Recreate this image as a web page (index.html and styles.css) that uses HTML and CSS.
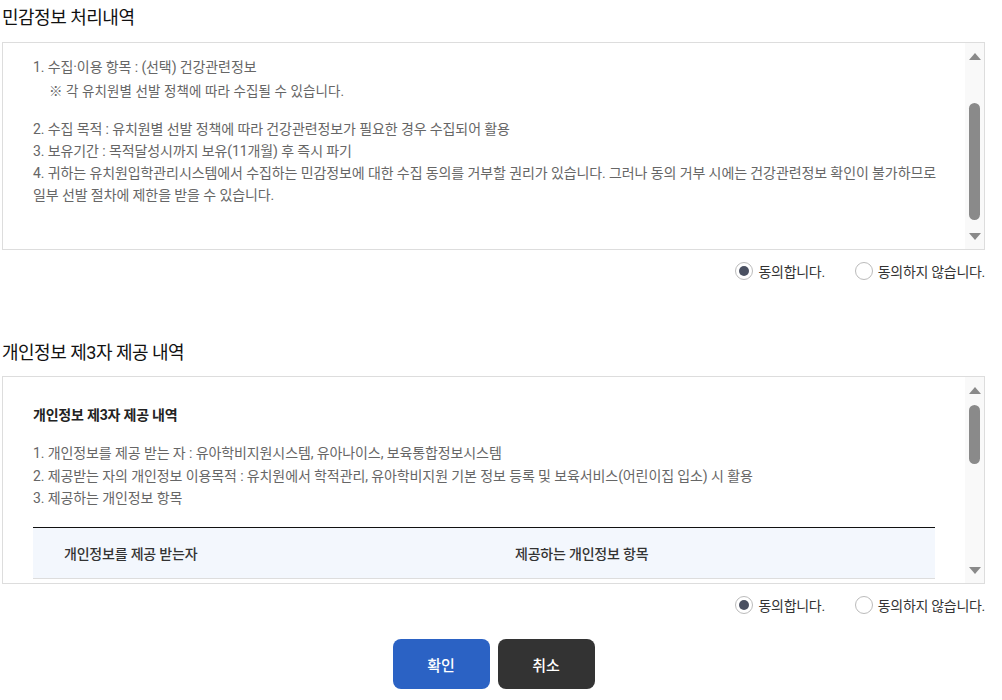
FILE: index.html
```html
<!DOCTYPE html>
<html lang="ko">
<head>
<meta charset="utf-8">
<title>동의</title>
<link rel="stylesheet" href="styles.css">
</head>
<body>
<div class="page">
  <h2 class="sec-title first">민감정보 처리내역</h2>
  <div class="box">
    <div class="box-content pad1">
      <p class="line">1. 수집·이용 항목 : (선택) 건강관련정보</p>
      <p class="line note">※ 각 유치원별 선발 정책에 따라 수집될 수 있습니다.</p>
      <p class="line gap">2. 수집 목적 : 유치원별 선발 정책에 따라 건강관련정보가 필요한 경우 수집되어 활용</p>
      <p class="line">3. 보유기간 : 목적달성시까지 보유(11개월) 후 즉시 파기</p>
      <p class="line">4. 귀하는 유치원입학관리시스템에서 수집하는 민감정보에 대한 수집 동의를 거부할 권리가 있습니다. 그러나 동의 거부 시에는 건강관련정보 확인이 불가하므로 일부 선발 절차에 제한을 받을 수 있습니다.</p>
    </div>
    <div class="sbar">
      <span class="arr up"></span>
      <div class="track"><span class="thumb t1"></span></div>
      <span class="arr down"></span>
    </div>
  </div>
  <div class="agree">
    <label class="radio"><span class="dot on"></span>동의합니다.</label>
    <label class="radio"><span class="dot"></span>동의하지 않습니다.</label>
  </div>

  <h2 class="sec-title second">개인정보 제3자 제공 내역</h2>
  <div class="box">
    <div class="box-content pad2">
      <p class="btitle">개인정보 제3자 제공 내역</p>
      <p class="line l2">1. 개인정보를 제공 받는 자 : 유아학비지원시스템, 유아나이스, 보육통합정보시스템</p>
      <p class="line l2">2. 제공받는 자의 개인정보 이용목적 : 유치원에서 학적관리, 유아학비지원 기본 정보 등록 및 보육서비스(어린이집 입소) 시 활용</p>
      <p class="line l2">3. 제공하는 개인정보 항목</p>
      <div class="tbl">
        <div class="th c1">개인정보를 제공 받는자</div>
        <div class="th c2">제공하는 개인정보 항목</div>
      </div>
    </div>
    <div class="sbar">
      <span class="arr up"></span>
      <div class="track"><span class="thumb t2"></span></div>
      <span class="arr down"></span>
    </div>
  </div>
  <div class="agree">
    <label class="radio"><span class="dot on"></span>동의합니다.</label>
    <label class="radio"><span class="dot"></span>동의하지 않습니다.</label>
  </div>

  <div class="btns">
    <button class="btn ok">확인</button>
    <button class="btn cancel">취소</button>
  </div>
</div>
</body>
</html>
```

FILE: styles.css
```css
* { box-sizing: border-box; }
html, body { margin: 0; padding: 0; background: #fff; }
body {
  font-family: Roboto, "Noto Sans CJK KR", sans-serif;
  color: #333;
}
.page {
  width: 983px;
  margin-left: 2px;
}
.sec-title {
  margin: 0;
  font-size: 18px;
  font-weight: 400;
  line-height: 26px;
  color: #111;
  letter-spacing: -0.5px;
}
.sec-title.first { padding-top: 5px; margin-bottom: 11px; }
.sec-title.second { margin-top: 58px; margin-bottom: 10px; }

.box {
  display: flex;
  height: 208px;
  border: 1px solid #ddd;
  background: #fff;
}
.box-content {
  flex: 1;
  overflow: hidden;
  word-break: keep-all;
}
.pad1 { padding: 13px 20px 0 30px; }
.pad2 { padding: 26px 30px 0 30px; }

.line {
  margin: 0;
  font-size: 14px;
  line-height: 22px;
  color: #666;
  letter-spacing: -0.1px;
}
.note { padding-left: 16px; font-size: 13.5px; margin-top: 2px; letter-spacing: 0.1px; }
.gap { margin-top: 16px; }
.btitle {
  margin: 0 0 15px;
  font-size: 14px;
  font-weight: 700;
  line-height: 24px;
  color: #222;
  letter-spacing: -0.2px;
}
.l2 { line-height: 22.5px; }

.tbl {
  display: flex;
  margin-top: 17px;
  border-top: 1px solid #111;
  border-bottom: 1px solid #ddd;
  background: #f3f7fd;
  height: 52px;
  align-items: center;
  font-size: 14px;
  letter-spacing: -0.2px;
  font-weight: 500;
  color: #333;
}
.th.c1 { padding-left: 31px; width: 482px; }

.sbar {
  width: 19px;
  flex: none;
  background: #f9f9f9;
  display: flex;
  flex-direction: column;
  align-items: center;
  padding: 10px 0 9px;
}
.arr {
  width: 0; height: 0;
  border-left: 6px solid transparent;
  border-right: 6px solid transparent;
  flex: none;
}
.arr.up { border-bottom: 7px solid #8a8a8a; }
.arr.down { border-top: 7px solid #8a8a8a; }
.track {
  flex: 1;
  width: 11px;
}
.thumb {
  display: block;
  width: 11px;
  background: #8a8a8a;
  border-radius: 6px;
}
.t1 { margin-top: 43px; height: 117px; }
.t2 { margin-top: 11px; height: 59px; }

.agree {
  display: flex;
  justify-content: flex-end;
  gap: 30px;
  margin-top: 10px;
  height: 22px;
  align-items: center;
}
.radio {
  display: flex;
  align-items: center;
  font-size: 14px;
  color: #333;
  letter-spacing: -0.3px;
  cursor: pointer;
}
.dot {
  width: 18px;
  height: 18px;
  border: 1px solid #bbb;
  border-radius: 50%;
  margin-right: 5px;
  display: flex;
  align-items: center;
  justify-content: center;
  background: #fff;
}
.dot.on::after {
  content: "";
  width: 10px;
  height: 10px;
  border-radius: 50%;
  background: #4a5061;
}

.btns {
  display: flex;
  justify-content: center;
  gap: 8px;
  margin-top: 23px;
}
.btn {
  width: 97px;
  height: 50px;
  border: 0;
  border-radius: 8px;
  color: #fff;
  font-family: Roboto, "Noto Sans CJK KR", sans-serif;
  font-size: 15px;
  font-weight: 500;
}
.btn.ok { background: #2b62c4; }
.btn.cancel { background: #333; }
```
